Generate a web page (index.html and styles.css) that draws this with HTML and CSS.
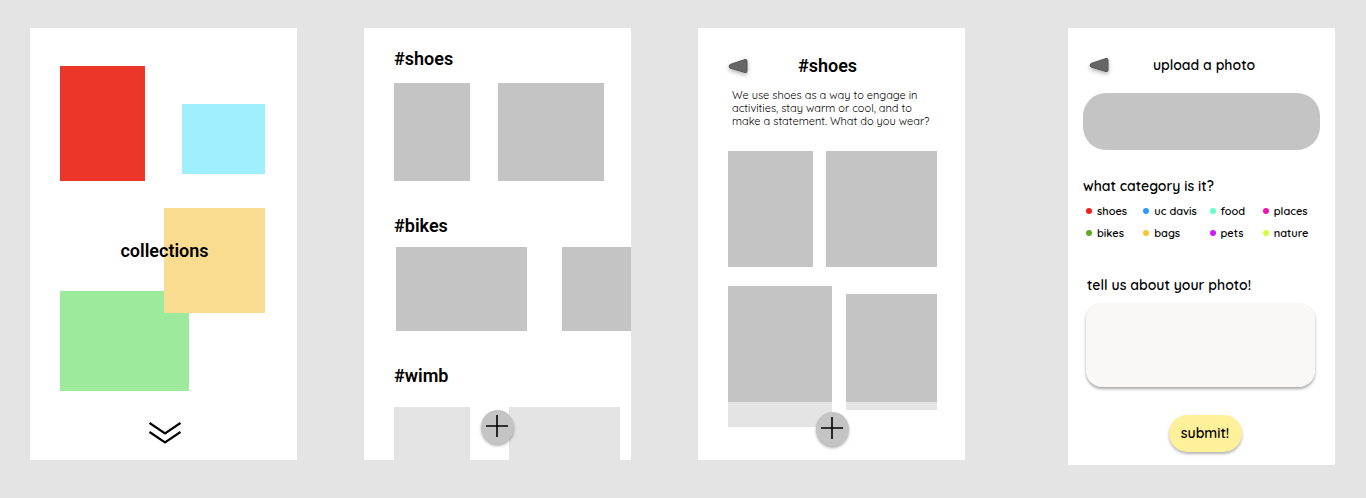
FILE: index.html
```html
<!DOCTYPE html>
<html lang="en">
<head>
<meta charset="utf-8">
<meta name="viewport" content="width=device-width, initial-scale=1">
<title>collections</title>
<link rel="stylesheet" href="styles.css">
</head>
<body>
<main class="board">
  <section class="screen home">
    <div class="collage">
      <div class="tile red"></div>
      <div class="tile cyan"></div>
      <div class="tile green"></div>
      <div class="tile yellow"></div>
      <h1 class="title collage-title">collections</h1>
    </div>
    <button class="more" type="button" aria-label="scroll down">
      <svg width="32" height="24" viewBox="0 0 32 24" fill="none" stroke="#000" stroke-width="2.2"><path d="M0.5 2 16 12.5 31.500 2M0.500 11 16 21.500 31.500 11"/></svg>
    </button>
  </section>

  <section class="screen feed">
    <h2 class="title">#shoes</h2>
    <div class="strip strip-shoes"><div class="photo"></div><div class="photo"></div></div>
    <h2 class="title">#bikes</h2>
    <div class="strip strip-bikes"><div class="photo"></div><div class="photo"></div></div>
    <h2 class="title">#wimb</h2>
    <div class="strip strip-wimb"><div class="photo faded"></div><div class="photo faded"></div></div>
    <button class="add" type="button" aria-label="add">
      <svg width="22" height="22" viewBox="0 0 22 22" stroke="#000" stroke-width="1.6"><path d="M11 0v22M0 11h22"/></svg>
    </button>
  </section>

  <section class="screen topic">
    <header class="bar">
      <button class="back" type="button" aria-label="back">
        <svg width="20" height="16" viewBox="0 0 20 16"><path d="M2 6.500 17 1.500Q19 1 19 3v10Q19 15 17 14.500L2 10Q0 8.500 2 6.500Z" fill="#666" stroke="#555"/></svg>
      </button>
      <h2 class="title">#shoes</h2>
    </header>
    <p class="intro">We use shoes as a way to engage in<br>activities, stay warm or cool, and to<br>make a statement. What do you wear?</p>
    <div class="pair pair-top"><div class="photo"></div><div class="photo"></div></div>
    <div class="pair pair-low"><div class="photo cut-long"></div><div class="photo cut-short"></div></div>
    <button class="add" type="button" aria-label="add">
      <svg width="22" height="22" viewBox="0 0 22 22" stroke="#000" stroke-width="1.6"><path d="M11 0v22M0 11h22"/></svg>
    </button>
  </section>

  <form class="screen upload">
    <header class="bar">
      <button class="back" type="button" aria-label="back">
        <svg width="20" height="16" viewBox="0 0 20 16"><path d="M2 6.500 17 1.500Q19 1 19 3v10Q19 15 17 14.500L2 10Q0 8.500 2 6.500Z" fill="#666" stroke="#555"/></svg>
      </button>
      <h2 class="label">upload a photo</h2>
    </header>
    <button class="picker" type="button" aria-label="choose a photo"></button>
    <fieldset class="categories">
      <legend class="label">what category is it?</legend>
      <div class="choices">
        <label class="choice"><input class="dot dot-shoes" type="radio" name="category">shoes</label>
        <label class="choice"><input class="dot dot-davis" type="radio" name="category">uc davis</label>
        <label class="choice"><input class="dot dot-food" type="radio" name="category">food</label>
        <label class="choice"><input class="dot dot-places" type="radio" name="category">places</label>
        <label class="choice"><input class="dot dot-bikes" type="radio" name="category">bikes</label>
        <label class="choice"><input class="dot dot-bags" type="radio" name="category">bags</label>
        <label class="choice"><input class="dot dot-pets" type="radio" name="category">pets</label>
        <label class="choice"><input class="dot dot-nature" type="radio" name="category">nature</label>
      </div>
    </fieldset>
    <label class="label story-label" for="story">tell us about your photo!</label>
    <textarea class="story" id="story"></textarea>
    <button class="submit label" type="submit">submit!</button>
  </form>
</main>
</body>
</html>
```
FILE: styles.css
```css
* { box-sizing: border-box; }

body {
  margin: 0;
  background: #e4e4e4;
  color: #000;
  font-family: Quicksand, Lato, sans-serif;
}

button {
  border: 0;
  padding: 0;
  background: none;
  color: inherit;
  font: inherit;
  cursor: pointer;
}

svg { display: block; }
h1, h2, p { margin: 0; }

.board {
  display: grid;
  grid-template-columns: 1fr 67px 1fr 67px 1fr 103px 1fr;
  align-items: start;
  padding: 28px 31px 28px 30px;
}

.screen {
  position: relative;
  min-width: 0;
  min-height: 432px;
  background: #fff;
}

.home { grid-column: 1; }
.feed { grid-column: 3; }
.topic { grid-column: 5; }
.upload { grid-column: 7; }

.title {
  font: 600 18px/22px Roboto, sans-serif;
}

.label {
  font-size: 14px;
  font-weight: 600;
  line-height: 18px;
}

/* Home */
.home { padding: 38px 28px 15px 30px; }

.collage {
  display: grid;
  grid-template-columns: 85fr 19fr 18fr 7fr 76fr;
  grid-template-rows: 38px 70px 7px 27px 83px 22px 78px;
  margin-right: 4px;
}

.red { grid-area: 1 / 1 / 4 / 2; background: #eb3629; }
.cyan { grid-area: 2 / 4 / 3 / 6; background: #a0effd; }
.green { grid-area: 6 / 1 / 8 / 5; background: #9dea9c; }
.yellow { grid-area: 5 / 3 / 7 / 6; background: #fadc91; }
.collage-title { grid-area: 5 / 1 / 6 / 6; place-self: center; padding: 2px 0 0 4px; }

.more { display: block; margin: 30px auto 0; }

/* Feed */
.feed { padding: 20px 0 0 30px; overflow: hidden; }

.photo { background: #c4c4c4; }
.faded { background: #e4e4e4; }

.strip { display: grid; }

.strip-shoes {
  grid-template-columns: 76fr 106fr;
  grid-template-rows: 98px;
  gap: 28px;
  margin: 13px 27px 34px 0;
}

.strip-bikes {
  grid-template-columns: 132fr 69fr;
  grid-template-rows: 84px;
  gap: 35px;
  margin: 10px 0 34px 2px;
}

.strip-wimb {
  grid-template-columns: 76fr 111fr;
  grid-template-rows: 53px;
  gap: 39px;
  margin: 20px 11px 0 0;
}

.add {
  position: absolute;
  bottom: 16px;
  left: 50%;
  display: grid;
  place-items: center;
  width: 33px;
  height: 34px;
  margin-left: -17px;
  padding-bottom: 2px;
  border-radius: 50%;
  background: #c4c4c4;
  box-shadow: 0 2px 3px rgba(0, 0, 0, .3);
}

/* Topic */
.topic { padding: 27px 28px 0 30px; }

.bar {
  display: grid;
  grid-template-columns: 20px 1fr 20px;
  align-items: center;
  text-align: center;
}

.topic .bar { margin-right: 10px; }

.back { filter: drop-shadow(0 2px 2px rgba(0, 0, 0, .3)); }

.intro {
  margin: 12px 0 23px 4px;
  font-size: 11px;
  line-height: 13px;
  white-space: nowrap;
}

.pair { display: grid; align-items: start; }

.pair-top {
  grid-template-columns: 85fr 111fr;
  grid-template-rows: 116px;
  align-items: stretch;
  gap: 13px;
  margin-bottom: 19px;
}

.pair-low {
  grid-template-columns: 104fr 91fr;
  gap: 14px;
}

.cut-long { height: 141px; border-bottom: 25px solid #e4e4e4; }
.cut-short { height: 116px; margin-top: 8px; border-bottom: 8px solid #e4e4e4; }

.topic .add { bottom: 14px; margin-left: -16px; }

/* Upload */
.upload { padding: 28px 15px 13px; }

.upload .bar { margin: 0 1px 0 6px; min-height: 18px; }

.picker {
  display: block;
  width: 100%;
  height: 57px;
  margin-top: 19px;
  border-radius: 23px;
  background: #c4c4c4;
}

.categories {
  min-width: 0;
  margin: 27px 0 0;
  padding: 0;
  border: 0;
}

.categories legend { padding: 0; }

.choices {
  display: grid;
  grid-template-columns: 57fr 66fr 53fr 57fr;
  row-gap: 8px;
  margin-top: 9px;
  padding-left: 3px;
}

.choice {
  display: flex;
  align-items: center;
  gap: 5px;
  font-size: 11px;
  font-weight: 600;
  line-height: 14px;
  white-space: nowrap;
}

.dot {
  appearance: none;
  flex: none;
  width: 6px;
  height: 6px;
  margin: 0;
  border-radius: 50%;
}

.dot-shoes { background: #f21d1d; }
.dot-davis { background: #2f9bff; }
.dot-food { background: #66ffcc; }
.dot-places { background: #f014b4; }
.dot-bikes { background: #61a823; }
.dot-bags { background: #fac42d; }
.dot-pets { background: #c81eff; }
.dot-nature { background: #d7ff38; }

.story-label { display: block; margin: 36px 0 9px 4px; }

.story {
  display: block;
  width: calc(100% - 8px);
  height: 84px;
  margin-left: 3px;
  padding: 12px;
  border: 0;
  border-radius: 16px;
  background: #f9f8f6;
  box-shadow: 0 2px 3px rgba(0, 0, 0, .35);
  font: inherit;
  resize: none;
}

.submit {
  display: block;
  width: 73px;
  height: 37px;
  margin: 28px auto 0;
  padding: 0 0 2px;
  border-radius: 19px;
  background: #fff09a;
  box-shadow: 0 2px 3px rgba(0, 0, 0, .3);
}

.upload .submit { margin-left: calc(50% - 33px); }
```
